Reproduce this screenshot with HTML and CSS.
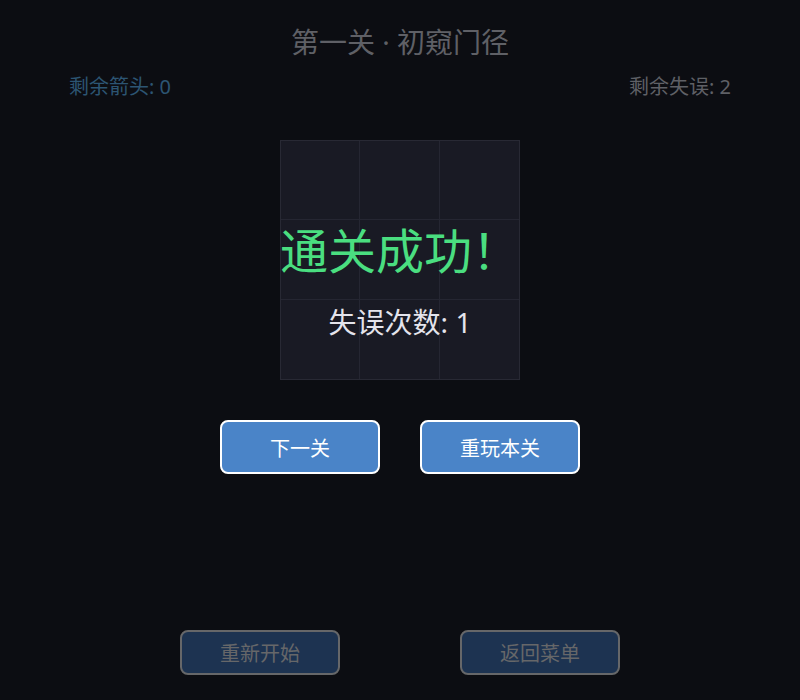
FILE: index.html
```html
<!DOCTYPE html>
<html lang="zh">
<head>
<meta charset="utf-8">
<title>第一关 · 初窥门径</title>
<link rel="stylesheet" href="styles.css">
</head>
<body>
<div class="screen">
  <h1 class="title">第一关 · 初窥门径</h1>
  <div class="stats">
    <span class="stat arrows">剩余箭头: 0</span>
    <span class="stat lives">剩余失误: 2</span>
  </div>
  <div class="board-wrap">
    <div class="board">
      <div class="cell"></div><div class="cell"></div><div class="cell"></div>
      <div class="cell"></div><div class="cell"></div><div class="cell"></div>
      <div class="cell"></div><div class="cell"></div><div class="cell"></div>
    </div>
    <div class="overlay">
      <div class="win">通关成功！</div>
      <div class="mistakes">失误次数: 1</div>
    </div>
  </div>
  <div class="actions">
    <button class="btn primary">下一关</button>
    <button class="btn primary">重玩本关</button>
  </div>
  <div class="footer">
    <button class="btn muted">重新开始</button>
    <button class="btn muted">返回菜单</button>
  </div>
</div>
</body>
</html>
```
FILE: styles.css
```css
* { box-sizing: border-box; }
html, body {
  margin: 0;
  padding: 0;
  background: #0c0d12;
}
body {
  font-family: "Noto Sans", "Noto Sans CJK SC", sans-serif;
  width: 800px;
  height: 700px;
  overflow: hidden;
}
.screen {
  display: flex;
  flex-direction: column;
  align-items: center;
  padding-top: 24px;
}
.title {
  margin: 0;
  font-size: 28px;
  font-weight: 400;
  line-height: 36px;
  color: #5f6066;
}
.stats {
  width: 100%;
  display: flex;
  justify-content: space-between;
  padding: 0 69px;
  margin-top: 12px;
  font-size: 20px;
  line-height: 30px;
}
.arrows { color: #2c5573; }
.lives { color: #5f6066; }
.board-wrap {
  position: relative;
  width: 240px;
  height: 240px;
  margin-top: 38px;
}
.board {
  width: 240px;
  height: 240px;
  background: #191a24;
  border: 1px solid #282934;
  display: grid;
  grid-template-columns: repeat(3, 1fr);
  grid-template-rows: repeat(3, 1fr);
}
.cell {
  border-right: 1px solid #252632;
  border-bottom: 1px solid #252632;
}
.cell:nth-child(3n) { border-right: none; }
.cell:nth-child(n+7) { border-bottom: none; }
.overlay {
  position: absolute;
  left: -40px;
  right: -40px;
  top: 0;
  bottom: 0;
  display: flex;
  flex-direction: column;
  align-items: center;
}
.win {
  margin-top: 76px;
  font-size: 48px;
  line-height: 70px;
  color: #4ade80;
  white-space: nowrap;
}
.mistakes {
  margin-top: 16px;
  font-size: 28px;
  line-height: 40px;
  color: #e4e4ec;
  white-space: nowrap;
}
.actions {
  display: flex;
  gap: 40px;
  margin-top: 40px;
}
.footer {
  display: flex;
  gap: 120px;
  margin-top: 156px;
}
.btn {
  width: 160px;
  font-family: inherit;
  font-size: 20px;
  padding: 0;
  cursor: pointer;
  border-radius: 8px;
}
.primary {
  height: 54px;
  background: #4a84c8;
  color: #ffffff;
  border: 2px solid #ffffff;
}
.muted {
  height: 45px;
  background: #1d3351;
  color: #666769;
  border: 2px solid #666769;
}
```
